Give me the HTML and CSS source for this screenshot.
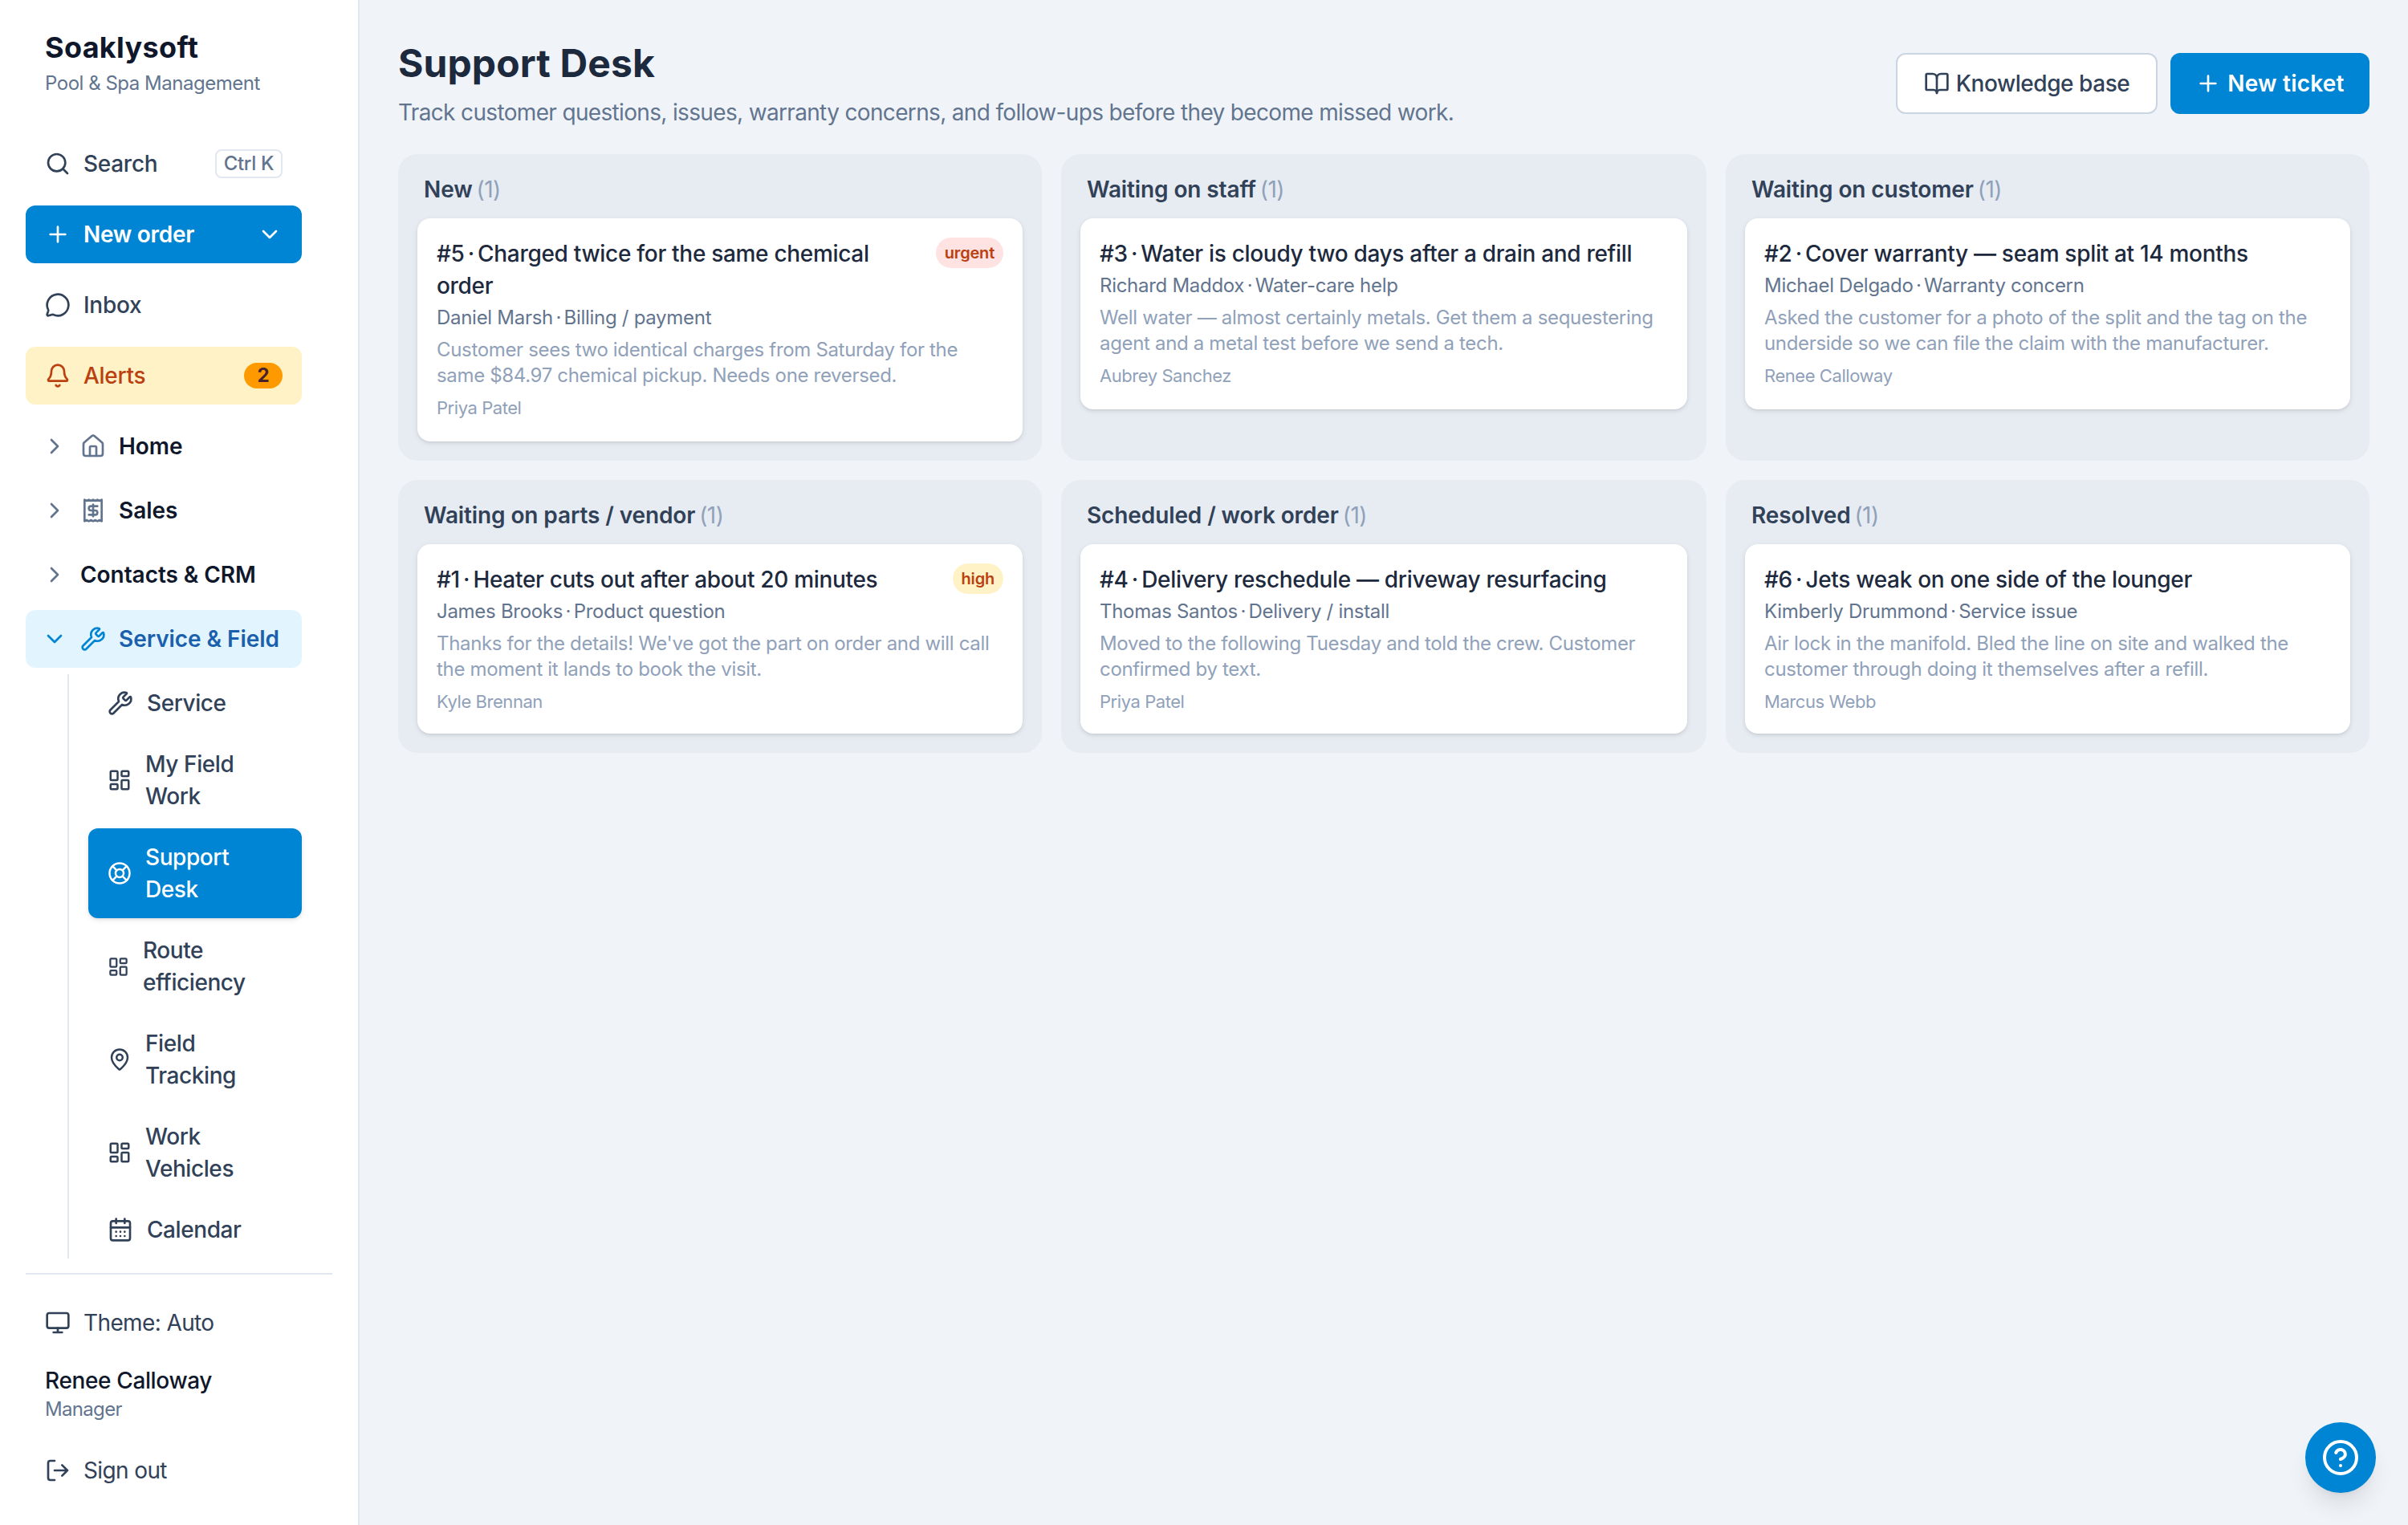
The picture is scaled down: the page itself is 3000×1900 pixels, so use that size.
FILE: index.html
```html
<!DOCTYPE html>
<html lang="en">
<head>
    <meta charset="UTF-8">
    <meta name="viewport" content="width=device-width, initial-scale=1.0">
    <title>Support Desk - Soaklysoft</title>
    <link rel="stylesheet" href="styles.css">
</head>
<body>
    <!-- Shared icons -->
    <svg class="sprite">
        <symbol id="i-search" viewBox="0 0 24 24"><circle cx="11" cy="11" r="8"/><path d="m21 21-4.3-4.3"/></symbol>
        <symbol id="i-plus" viewBox="0 0 24 24"><path d="M5 12h14M12 5v14"/></symbol>
        <symbol id="i-down" viewBox="0 0 24 24"><path d="m6 9 6 6 6-6"/></symbol>
        <symbol id="i-right" viewBox="0 0 24 24"><path d="m9 18 6-6-6-6"/></symbol>
        <symbol id="i-chat" viewBox="0 0 24 24"><path d="M2.992 16.342a2 2 0 0 1 .094 1.167l-1.065 3.29a1 1 0 0 0 1.236 1.168l3.413-.998a2 2 0 0 1 1.099.092 10 10 0 1 0-4.777-4.719"/></symbol>
        <symbol id="i-bell" viewBox="0 0 24 24"><path d="M10.268 21a2 2 0 0 0 3.464 0"/><path d="M3.262 15.326A1 1 0 0 0 4 17h16a1 1 0 0 0 .74-1.673C19.41 13.956 18 12.499 18 8A6 6 0 0 0 6 8c0 4.499-1.411 5.956-2.738 7.326"/></symbol>
        <symbol id="i-home" viewBox="0 0 24 24"><path d="M15 21v-8a1 1 0 0 0-1-1h-4a1 1 0 0 0-1 1v8"/><path d="M3 10a2 2 0 0 1 .709-1.528l7-5.999a2 2 0 0 1 2.582 0l7 5.999A2 2 0 0 1 21 10v9a2 2 0 0 1-2 2H5a2 2 0 0 1-2-2z"/></symbol>
        <symbol id="i-receipt" viewBox="0 0 24 24"><path d="M4 2v20l2-1 2 1 2-1 2 1 2-1 2 1 2-1 2 1V2l-2 1-2-1-2 1-2-1-2 1-2-1-2 1Z"/><path d="M16 8h-6a2 2 0 1 0 0 4h4a2 2 0 1 1 0 4H8"/><path d="M12 17.500V6.500"/></symbol>
        <symbol id="i-wrench" viewBox="0 0 24 24"><path d="M14.700 6.300a1 1 0 0 0 0 1.400l1.600 1.600a1 1 0 0 0 1.400 0l3.106-3.105c.32-.322.863-.22.983.218a6 6 0 0 1-8.259 7.057l-7.910 7.910a1 1 0 0 1-2.999-3l7.910-7.910a6 6 0 0 1 7.057-8.259c.438.12.54.662.219.984z"/></symbol>
        <symbol id="i-board" viewBox="0 0 24 24"><rect width="7" height="9" x="3" y="3" rx="1"/><rect width="7" height="5" x="14" y="3" rx="1"/><rect width="7" height="9" x="14" y="12" rx="1"/><rect width="7" height="5" x="3" y="16" rx="1"/></symbol>
        <symbol id="i-buoy" viewBox="0 0 24 24"><circle cx="12" cy="12" r="10"/><path d="m4.930 4.930 4.240 4.240M14.830 9.170l4.240-4.240M14.830 14.830l4.240 4.240M9.170 14.830l-4.240 4.240"/><circle cx="12" cy="12" r="4"/></symbol>
        <symbol id="i-pin" viewBox="0 0 24 24"><path d="M20 10c0 4.993-5.539 10.193-7.399 11.799a1 1 0 0 1-1.202 0C9.539 20.193 4 14.993 4 10a8 8 0 0 1 16 0"/><circle cx="12" cy="10" r="3"/></symbol>
        <symbol id="i-calendar" viewBox="0 0 24 24"><path d="M8 2v4M16 2v4"/><rect width="18" height="18" x="3" y="4" rx="2"/><path d="M3 10h18M8 14h.01M12 14h.01M16 14h.01M8 18h.01M12 18h.01M16 18h.01"/></symbol>
        <symbol id="i-monitor" viewBox="0 0 24 24"><rect width="20" height="14" x="2" y="3" rx="2"/><path d="M8 21h8M12 17v4"/></symbol>
        <symbol id="i-logout" viewBox="0 0 24 24"><path d="m16 17 5-5-5-5M21 12H9M9 21H5a2 2 0 0 1-2-2V5a2 2 0 0 1 2-2h4"/></symbol>
        <symbol id="i-book" viewBox="0 0 24 24"><path d="M12 7v14"/><path d="M3 18a1 1 0 0 1-1-1V4a1 1 0 0 1 1-1h5a4 4 0 0 1 4 4 4 4 0 0 1 4-4h5a1 1 0 0 1 1 1v13a1 1 0 0 1-1 1h-6a3 3 0 0 0-3 3 3 3 0 0 0-3-3z"/></symbol>
        <symbol id="i-help" viewBox="0 0 24 24"><circle cx="12" cy="12" r="10"/><path d="M9.090 9a3 3 0 0 1 5.830 1c0 2-3 3-3 3M12 17h.01"/></symbol>
    </svg>

    <aside class="sidebar">
        <div class="brand">
            <div class="brand-name">Soaklysoft</div>
            <div class="brand-tag">Pool &amp; Spa Management</div>
        </div>

        <nav class="nav">
            <a class="nav-item"><svg class="icon"><use href="#i-search"/></svg>Search <kbd class="kbd">Ctrl K</kbd></a>
            <a class="nav-item new-order"><svg class="icon"><use href="#i-plus"/></svg>New order <svg class="icon push"><use href="#i-down"/></svg></a>
            <a class="nav-item"><svg class="icon"><use href="#i-chat"/></svg>Inbox</a>
            <a class="nav-item alerts"><svg class="icon"><use href="#i-bell"/></svg>Alerts <span class="count">2</span></a>

            <div class="groups">
                <a class="group"><svg class="icon"><use href="#i-right"/></svg><svg class="icon"><use href="#i-home"/></svg>Home</a>
                <a class="group"><svg class="icon"><use href="#i-right"/></svg><svg class="icon"><use href="#i-receipt"/></svg>Sales</a>
                <a class="group"><svg class="icon"><use href="#i-right"/></svg>Contacts &amp; CRM</a>
                <a class="group open"><svg class="icon"><use href="#i-down"/></svg><svg class="icon"><use href="#i-wrench"/></svg>Service &amp; Field</a>
                <div class="sub">
                    <a class="sub-item"><svg class="icon"><use href="#i-wrench"/></svg>Service</a>
                    <a class="sub-item"><svg class="icon icon-sm"><use href="#i-board"/></svg><span>My Field<br>Work</span></a>
                    <a class="sub-item active"><svg class="icon icon-sm"><use href="#i-buoy"/></svg><span>Support<br>Desk</span></a>
                    <a class="sub-item"><svg class="icon icon-xs"><use href="#i-board"/></svg><span>Route<br>efficiency</span></a>
                    <a class="sub-item"><svg class="icon icon-sm"><use href="#i-pin"/></svg><span>Field<br>Tracking</span></a>
                    <a class="sub-item"><svg class="icon icon-sm"><use href="#i-board"/></svg><span>Work<br>Vehicles</span></a>
                    <a class="sub-item"><svg class="icon"><use href="#i-calendar"/></svg>Calendar</a>
                </div>
            </div>
        </nav>

        <div class="account">
            <a class="nav-item plain"><svg class="icon"><use href="#i-monitor"/></svg>Theme: Auto</a>
            <div class="user">
                <div class="user-name">Renee Calloway</div>
                <div class="user-role">Manager</div>
            </div>
            <a class="nav-item plain"><svg class="icon"><use href="#i-logout"/></svg>Sign out</a>
        </div>
    </aside>

    <main class="main">
        <header class="page-header">
            <div>
                <h1>Support Desk</h1>
                <p class="subtitle">Track customer questions, issues, warranty concerns, and follow-ups before they become missed work.</p>
            </div>
            <div class="actions">
                <button class="btn btn-outline"><svg class="icon"><use href="#i-book"/></svg>Knowledge base</button>
                <button class="btn btn-primary"><svg class="icon"><use href="#i-plus"/></svg>New ticket</button>
            </div>
        </header>

        <div class="board">
            <section class="column">
                <h2>New <span>(1)</span></h2>
                <article class="ticket">
                    <div class="ticket-top">
                        <h3>#5 <i>·</i> Charged twice for the same chemical<br>order</h3>
                        <span class="badge urgent">urgent</span>
                    </div>
                    <p class="who">Daniel Marsh <i>·</i> Billing / payment</p>
                    <p class="note">Customer sees two identical charges from Saturday for the<br>same $84.97 chemical pickup. Needs one reversed.</p>
                    <p class="agent">Priya Patel</p>
                </article>
            </section>
            <section class="column">
                <h2>Waiting on staff <span>(1)</span></h2>
                <article class="ticket">
                    <div class="ticket-top">
                        <h3>#3 <i>·</i> Water is cloudy two days after a drain and refill</h3>
                    </div>
                    <p class="who">Richard Maddox <i>·</i> Water-care help</p>
                    <p class="note">Well water — almost certainly metals. Get them a sequestering<br>agent and a metal test before we send a tech.</p>
                    <p class="agent">Aubrey Sanchez</p>
                </article>
            </section>
            <section class="column">
                <h2>Waiting on customer <span>(1)</span></h2>
                <article class="ticket">
                    <div class="ticket-top">
                        <h3>#2 <i>·</i> Cover warranty — seam split at 14 months</h3>
                    </div>
                    <p class="who">Michael Delgado <i>·</i> Warranty concern</p>
                    <p class="note">Asked the customer for a photo of the split and the tag on the<br>underside so we can file the claim with the manufacturer.</p>
                    <p class="agent">Renee Calloway</p>
                </article>
            </section>
            <section class="column compact">
                <h2>Waiting on parts / vendor <span>(1)</span></h2>
                <article class="ticket">
                    <div class="ticket-top">
                        <h3>#1 <i>·</i> Heater cuts out after about 20 minutes</h3>
                        <span class="badge high">high</span>
                    </div>
                    <p class="who">James Brooks <i>·</i> Product question</p>
                    <p class="note">Thanks for the details! We've got the part on order and will call<br>the moment it lands to book the visit.</p>
                    <p class="agent">Kyle Brennan</p>
                </article>
            </section>
            <section class="column compact">
                <h2>Scheduled / work order <span>(1)</span></h2>
                <article class="ticket">
                    <div class="ticket-top">
                        <h3>#4 <i>·</i> Delivery reschedule — driveway resurfacing</h3>
                    </div>
                    <p class="who">Thomas Santos <i>·</i> Delivery / install</p>
                    <p class="note">Moved to the following Tuesday and told the crew. Customer<br>confirmed by text.</p>
                    <p class="agent">Priya Patel</p>
                </article>
            </section>
            <section class="column compact">
                <h2>Resolved <span>(1)</span></h2>
                <article class="ticket">
                    <div class="ticket-top">
                        <h3>#6 <i>·</i> Jets weak on one side of the lounger</h3>
                    </div>
                    <p class="who">Kimberly Drummond <i>·</i> Service issue</p>
                    <p class="note">Air lock in the manifold. Bled the line on site and walked the<br>customer through doing it themselves after a refill.</p>
                    <p class="agent">Marcus Webb</p>
                </article>
            </section>
        </div>
    </main>

    <button class="help"><svg class="icon"><use href="#i-help"/></svg></button>
</body>
</html>
```
FILE: styles.css
```css
* {
    box-sizing: border-box;
}
body {
    margin: 0;
    display: flex;
    height: 1900px;
    overflow: hidden;
    background: #f0f4f9;
    color: #314158;
    font-family: Inter, sans-serif;
    font-size: 28px;
    line-height: 40px;
    letter-spacing: -0.015em;
}
h1, h2, h3, p {
    margin: 0;
}
.sprite {
    display: none;
}
.icon {
    width: 32px;
    height: 32px;
    flex-shrink: 0;
    fill: none;
    stroke: currentColor;
    stroke-width: 2;
    stroke-linecap: round;
    stroke-linejoin: round;
}
.icon-sm {
    width: 30px;
    height: 30px;
}
.icon-xs {
    width: 27px;
    height: 27px;
}

/* Sidebar */
.sidebar {
    width: 448px;
    flex-shrink: 0;
    display: flex;
    flex-direction: column;
    padding: 32px;
    background: #fff;
    border-right: 2px solid #e2e8f0;
}
.brand {
    padding-left: 24px;
    margin-bottom: 48px;
}
.brand-name {
    font-size: 36px;
    line-height: 54px;
    font-weight: 700;
    letter-spacing: 0.009em;
    color: #0f172b;
}
.brand-tag {
    margin-top: 2px;
    font-size: 24px;
    line-height: 32px;
    letter-spacing: -0.02em;
    color: #62748e;
}
.nav {
    width: 344px;
    display: flex;
    flex-direction: column;
    gap: 16px;
}
.nav-item {
    display: flex;
    align-items: center;
    gap: 16px;
    height: 72px;
    padding: 0 24px;
    border-radius: 12px;
    font-weight: 500;
    letter-spacing: -0.01em;
}
.kbd {
    margin-left: auto;
    width: 84px;
    height: 36px;
    border: 2px solid #e2e8f0;
    border-radius: 8px;
    font-family: inherit;
    font-size: 24px;
    line-height: 31px;
    text-align: center;
    color: #62748e;
}
.new-order {
    background: #0084d4;
    color: #fff;
    font-weight: 600;
}
.push {
    margin-left: auto;
}
.alerts {
    background: #fef2c6;
    color: #bb4010;
}
.count {
    margin-left: auto;
    width: 48px;
    height: 32px;
    border-radius: 16px;
    background: #fe9a00;
    color: #45222c;
    font-size: 24px;
    line-height: 32px;
    font-weight: 700;
    text-align: center;
}
.groups {
    display: flex;
    flex-direction: column;
    gap: 8px;
}
.group {
    display: flex;
    align-items: center;
    gap: 16px;
    height: 72px;
    padding: 0 20px;
    border-radius: 12px;
    font-weight: 600;
    letter-spacing: -0.002em;
    color: #0f172b;
}
.group .icon {
    color: #62748e;
}
.group.open {
    background: #e2f5fe;
    color: #1a60ad;
}
.group.open .icon {
    color: #0084d4;
}
.sub {
    display: flex;
    flex-direction: column;
    gap: 4px;
    margin-left: 52px;
    padding-left: 24px;
    border-left: 2px solid #e2e8f0;
}
.sub-item {
    display: flex;
    align-items: center;
    gap: 17px;
    padding: 16px 24px;
    border-radius: 12px;
    font-weight: 500;
}
.sub-item.active {
    background: #0084d4;
    color: #fff;
    box-shadow: 0 2px 6px rgba(0, 0, 0, 0.1), 0 2px 4px -2px rgba(0, 0, 0, 0.1);
}
.account {
    margin-top: auto;
    padding-top: 24px;
    border-top: 2px solid #e2e8f0;
}
.plain {
    font-weight: 400;
    letter-spacing: -0.022em;
}
.user {
    padding: 16px 24px 24px;
}
.user-name {
    font-weight: 500;
    letter-spacing: -0.013em;
    color: #0f172b;
}
.user-role {
    font-size: 24px;
    line-height: 32px;
    letter-spacing: -0.028em;
    color: #62748e;
}

/* Main */
.main {
    flex: 1;
    padding: 48px;
}
.page-header {
    display: flex;
    align-items: center;
    justify-content: space-between;
    margin-bottom: 32px;
}
h1 {
    font-size: 48px;
    line-height: 62px;
    letter-spacing: 0.002em;
    color: #1d293d;
}
.subtitle {
    margin-top: 10px;
    letter-spacing: -0.0235em;
    color: #62748e;
}
.actions {
    display: flex;
    gap: 16px;
}
.btn {
    display: flex;
    align-items: center;
    justify-content: center;
    gap: 8px;
    height: 76px;
    border: 2px solid #cad5e2;
    border-radius: 12px;
    font: inherit;
    font-weight: 500;
    letter-spacing: -0.016em;
    white-space: nowrap;
}
.btn-outline {
    width: 326px;
    background: #fff;
    color: #314158;
}
.btn-primary {
    width: 248px;
    background: #0084d4;
    border-color: #0084d4;
    color: #fff;
    font-weight: 600;
    letter-spacing: 0.008em;
}
.board {
    display: grid;
    grid-template-columns: 802px 804px 802px;
    gap: 24px;
}
.column {
    padding: 24px;
    border-radius: 24px;
    background: #e7ecf3;
}
.column h2 {
    margin-bottom: 16px;
    padding: 0 8px;
    font-size: 28px;
    font-weight: 600;
    letter-spacing: -0.004em;
}
.column h2 span {
    margin-left: -2px;
    font-weight: 400;
    letter-spacing: -0.02em;
    color: #90a1b9;
}
.ticket {
    padding: 24px 24px 25px;
    border-radius: 16px;
    background: #fff;
    box-shadow: 0 2px 6px rgba(0, 0, 0, 0.1), 0 2px 4px -2px rgba(0, 0, 0, 0.1);
}
.compact .ticket {
    padding-bottom: 23px;
}
.ticket-top {
    display: flex;
    align-items: flex-start;
    justify-content: space-between;
}
.ticket h3 {
    font-size: 28px;
    font-weight: 500;
    letter-spacing: -0.011em;
    color: #1d293d;
    white-space: nowrap;
}
/* pull the separator dot closer to its neighbours */
.ticket i {
    margin: 0 -3px;
    font-style: normal;
}
.badge {
    height: 38px;
    padding: 0 11px;
    border-radius: 19px;
    font-size: 20px;
    line-height: 38px;
    font-weight: 600;
    letter-spacing: -0.01em;
    color: #bb4010;
}
.urgent {
    background: #ffe2e2;
}
.high {
    background: #fef2c6;
}
.who {
    margin-top: 4px;
    font-size: 24px;
    line-height: 32px;
    letter-spacing: -0.012em;
    color: #62748e;
}
.note {
    margin-top: 8px;
    font-size: 24px;
    line-height: 32px;
    letter-spacing: -0.0138em;
    color: #90a1b9;
    white-space: nowrap;
}
.agent {
    margin-top: 8px;
    font-size: 22px;
    line-height: 33px;
    letter-spacing: -0.02em;
    color: #90a1b9;
}

/* Floating help button */
.help {
    position: absolute;
    right: 40px;
    bottom: 40px;
    display: flex;
    align-items: center;
    justify-content: center;
    width: 88px;
    height: 88px;
    border: 0;
    border-radius: 50%;
    background: #0084d4;
    color: #fff;
    box-shadow: 0 20px 30px -6px rgba(0, 0, 0, 0.1), 0 8px 12px -8px rgba(0, 0, 0, 0.1);
}
.help .icon {
    width: 48px;
    height: 48px;
}
```
